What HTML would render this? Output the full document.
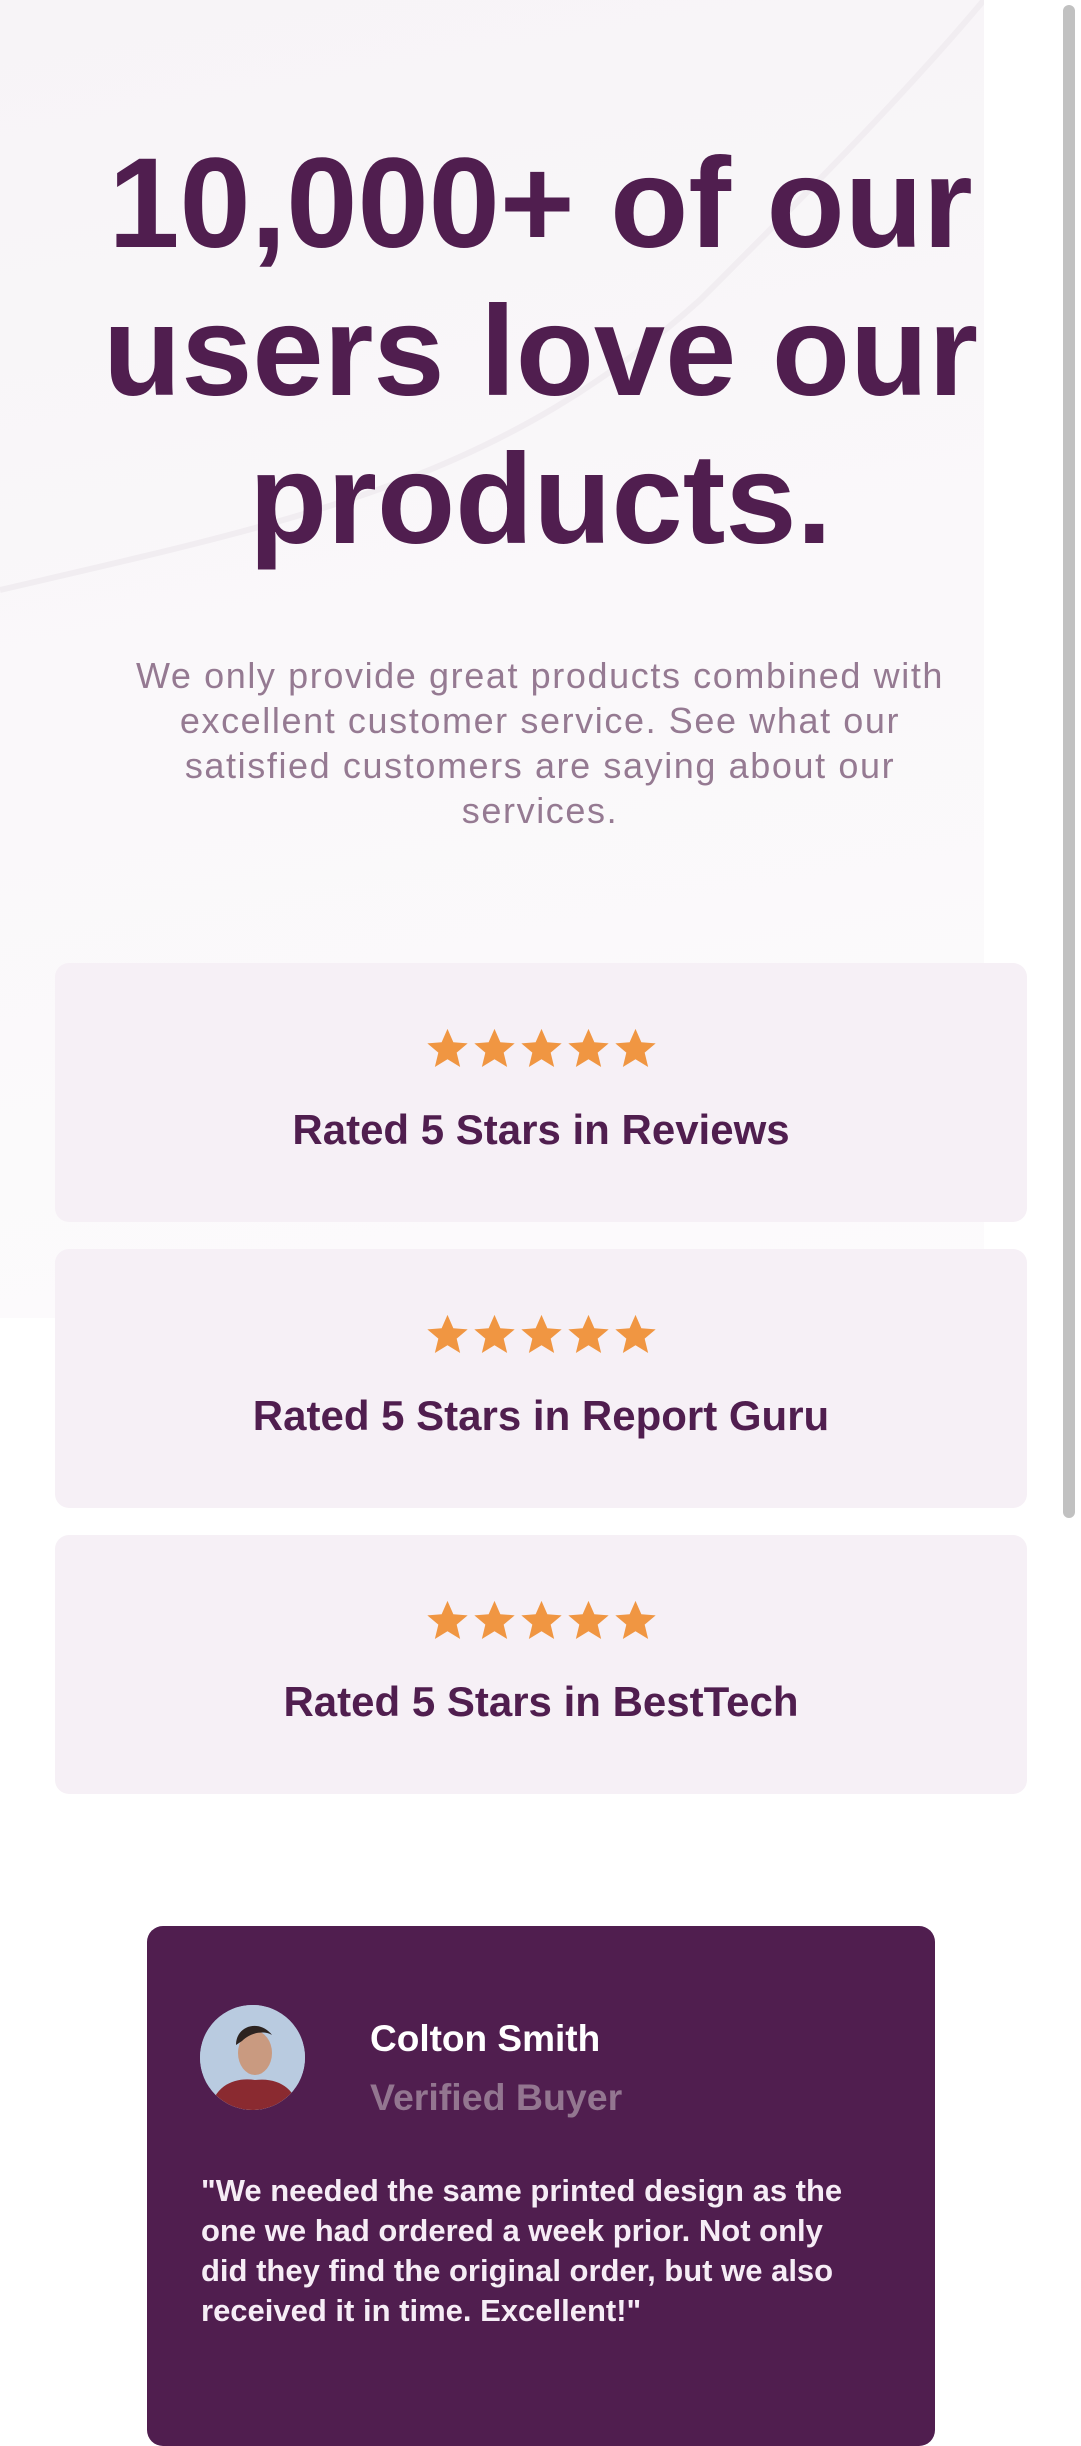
<!DOCTYPE html>
<html><head><meta charset="utf-8"><style>
*{margin:0;padding:0;box-sizing:border-box}
html,body{width:1081px;height:2401px;overflow:hidden;background:#fff;font-family:"Liberation Sans",sans-serif}
.bg{position:absolute;left:0;top:0;width:984px;height:1318px;background:linear-gradient(170deg,#f7f4f7 0%,#faf8fa 50%,#fcfbfc 100%)}
.sb{position:absolute;left:1063px;top:5px;width:12px;height:1513px;background:#c1c1c1;border-radius:6px}
h1{position:absolute;left:0;width:1081px;top:130px;text-align:center;color:#501e4f;font-size:128px;line-height:148px;font-weight:bold;letter-spacing:0}
p.sub{position:absolute;left:40px;width:1000px;top:653px;text-align:center;color:#957a92;font-size:36px;line-height:45px;letter-spacing:1.6px;white-space:nowrap}
.card{position:absolute;left:55px;width:972px;height:259px;background:#f6f0f6;border-radius:14px;text-align:center}
.stars{position:absolute;left:0;right:0;top:64px;height:44px;display:flex;justify-content:center;gap:2px}
.stars svg{width:45px;height:44px}
.card h3{position:absolute;left:0;right:0;top:144px;color:#501e4f;font-size:42px;line-height:46px;font-weight:bold}
.t{position:absolute;left:147px;width:788px;top:1926px;height:520px;background:#501e4f;border-radius:16px}
.av{position:absolute;left:53px;top:79px;width:105px;height:105px;border-radius:50%;background:#b7c9dc;overflow:hidden}
.nm{position:absolute;left:223px;top:92px;color:#fff;font-size:37px;font-weight:bold}
.vb{position:absolute;left:223px;top:150px;color:#937690;font-size:37.5px;font-weight:bold}
.q{position:absolute;left:54px;width:670px;top:245px;color:#f6edf6;font-size:31px;line-height:40px;font-weight:bold}
</style></head><body>
<div class="bg"></div>
<svg style="position:absolute;left:0;top:0" width="984" height="1318"><path d="M0 590 C300 520 500 480 700 300 C800 200 900 100 984 0" stroke="#f1edf1" stroke-width="6" fill="none"/></svg>
<div class="sb"></div>
<h1>10,000+ of our<br>users love our<br>products.</h1>
<p class="sub">We only provide great products combined with<br>excellent customer service. See what our<br>satisfied customers are saying about our<br>services.</p>
<div class="card" style="top:963px"><div class="stars">
<svg viewBox="0 0 24 24"><path fill="#f09642" d="M12 1l3.2 7.3 7.8.6-6 5.1 1.9 7.8L12 17.6 5.1 21.8 7 14 1 8.9l7.8-.6z"/></svg><svg viewBox="0 0 24 24"><path fill="#f09642" d="M12 1l3.2 7.3 7.8.6-6 5.1 1.9 7.8L12 17.6 5.1 21.8 7 14 1 8.9l7.8-.6z"/></svg><svg viewBox="0 0 24 24"><path fill="#f09642" d="M12 1l3.2 7.3 7.8.6-6 5.1 1.9 7.8L12 17.6 5.1 21.8 7 14 1 8.9l7.8-.6z"/></svg><svg viewBox="0 0 24 24"><path fill="#f09642" d="M12 1l3.2 7.3 7.8.6-6 5.1 1.9 7.8L12 17.6 5.1 21.8 7 14 1 8.9l7.8-.6z"/></svg><svg viewBox="0 0 24 24"><path fill="#f09642" d="M12 1l3.2 7.3 7.8.6-6 5.1 1.9 7.8L12 17.6 5.1 21.8 7 14 1 8.9l7.8-.6z"/></svg>
</div><h3>Rated 5 Stars in Reviews</h3></div>
<div class="card" style="top:1249px"><div class="stars">
<svg viewBox="0 0 24 24"><path fill="#f09642" d="M12 1l3.2 7.3 7.8.6-6 5.1 1.9 7.8L12 17.6 5.1 21.8 7 14 1 8.9l7.8-.6z"/></svg><svg viewBox="0 0 24 24"><path fill="#f09642" d="M12 1l3.2 7.3 7.8.6-6 5.1 1.9 7.8L12 17.6 5.1 21.8 7 14 1 8.9l7.8-.6z"/></svg><svg viewBox="0 0 24 24"><path fill="#f09642" d="M12 1l3.2 7.3 7.8.6-6 5.1 1.9 7.8L12 17.6 5.1 21.8 7 14 1 8.9l7.8-.6z"/></svg><svg viewBox="0 0 24 24"><path fill="#f09642" d="M12 1l3.2 7.3 7.8.6-6 5.1 1.9 7.8L12 17.6 5.1 21.8 7 14 1 8.9l7.8-.6z"/></svg><svg viewBox="0 0 24 24"><path fill="#f09642" d="M12 1l3.2 7.3 7.8.6-6 5.1 1.9 7.8L12 17.6 5.1 21.8 7 14 1 8.9l7.8-.6z"/></svg>
</div><h3>Rated 5 Stars in Report Guru</h3></div>
<div class="card" style="top:1535px"><div class="stars">
<svg viewBox="0 0 24 24"><path fill="#f09642" d="M12 1l3.2 7.3 7.8.6-6 5.1 1.9 7.8L12 17.6 5.1 21.8 7 14 1 8.9l7.8-.6z"/></svg><svg viewBox="0 0 24 24"><path fill="#f09642" d="M12 1l3.2 7.3 7.8.6-6 5.1 1.9 7.8L12 17.6 5.1 21.8 7 14 1 8.9l7.8-.6z"/></svg><svg viewBox="0 0 24 24"><path fill="#f09642" d="M12 1l3.2 7.3 7.8.6-6 5.1 1.9 7.8L12 17.6 5.1 21.8 7 14 1 8.9l7.8-.6z"/></svg><svg viewBox="0 0 24 24"><path fill="#f09642" d="M12 1l3.2 7.3 7.8.6-6 5.1 1.9 7.8L12 17.6 5.1 21.8 7 14 1 8.9l7.8-.6z"/></svg><svg viewBox="0 0 24 24"><path fill="#f09642" d="M12 1l3.2 7.3 7.8.6-6 5.1 1.9 7.8L12 17.6 5.1 21.8 7 14 1 8.9l7.8-.6z"/></svg>
</div><h3>Rated 5 Stars in BestTech</h3></div>
<div class="t">
<div class="av"><svg width="105" height="105" viewBox="0 0 105 105"><rect width="105" height="105" fill="#b9cbe0"/><path d="M10 105 C15 80 35 72 55 75 C80 72 95 85 100 105Z" fill="#8a2a30"/><ellipse cx="55" cy="48" rx="17" ry="22" fill="#c99a80"/><path d="M36 40 C36 20 60 14 72 30 C66 26 52 26 42 36Z" fill="#2c2320"/></svg></div>
<div class="nm">Colton Smith</div>
<div class="vb">Verified Buyer</div>
<div class="q">"We needed the same printed design as the one we had ordered a week prior. Not only did they find the original order, but we also received it in time. Excellent!"</div>
</div>
</body></html>
